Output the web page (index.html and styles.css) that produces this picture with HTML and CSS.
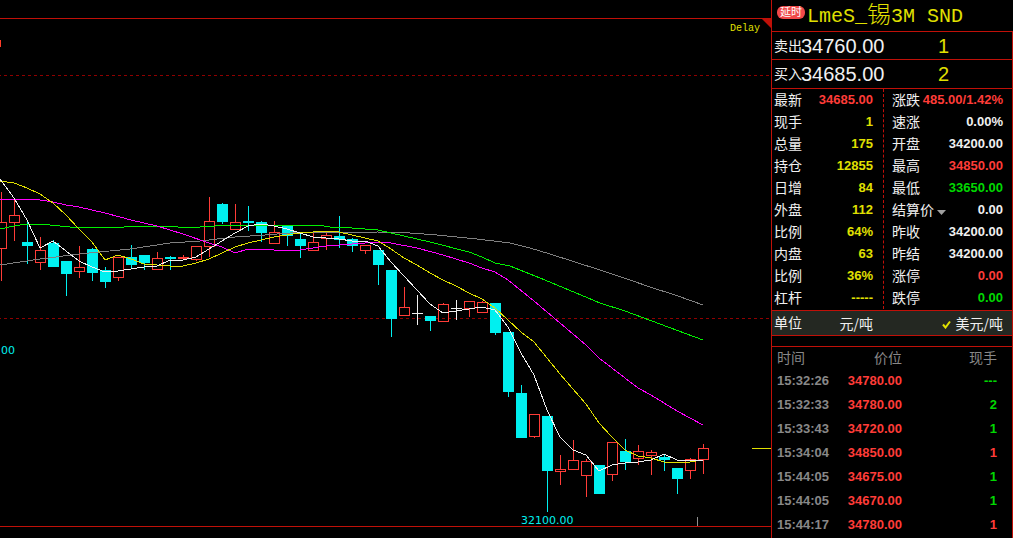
FILE: index.html
```html
<!DOCTYPE html>
<html lang="zh-CN">
<head>
<meta charset="utf-8">
<title>LmeS_锡3M SND</title>
<link rel="stylesheet" href="styles.css">
</head>
<body>
<div class="terminal">
  <main class="chart">
    <svg class="plot" viewBox="0 0 771 538" preserveAspectRatio="xMaxYMin meet" role="img" aria-label="K线图">
      <path class="frame" d="M0 18.5H771M0 526.5H771"/>
      <path class="corner" d="M762 19H771V28Z"/>
      <path class="grid" d="M-2 75.5H771M-2 318.5H771"/>
      <path class="clipped-mark" d="M0 40h1v7h-1z"/>
      <g id="candles" shape-rendering="crispEdges"></g>
      <g class="averages">
        <polyline class="ma60" points="0,265 40,259 79,254 130,249 170,243 200,241 235,237 265,235 290,233 378,232 410,233 437,235 477,239 510,243 530,248 550,254 600,270 630,280 650,287 675,295 703,305"/>
        <polyline class="ma40" points="0,229 14,226 27,224 40,224 70,227 124,227 150,226 178,227 200,227 215,226 235,225 318,225 330,227 352,228 378,230 404,236 430,242 469,252 482,257 495,263 510,266 545,280 600,303 625,311 703,340"/>
        <polyline class="ma20" points="0,200 14,199 40,200 53,202 66,205 79,207 105,213 131,220 157,226 183,234 209,243 222,247 235,253 248,249 274,250 300,250 313,248 326,246 352,244 378,242 391,243 417,248 443,255 469,263 482,268 495,272 508,280 534,301 560,323 586,345 599,358 638,388 651,395 677,411 703,425"/>
        <polyline class="ma10" points="0,181 14,183 27,188 40,194 53,203 66,215 79,229 92,242 105,260 118,255 131,259 144,264 157,265 170,266 183,266 196,263 209,259 222,253 235,247 248,243 261,240 274,237 287,235 300,233 313,232 326,231 339,232 352,235 365,238 378,241 391,249 404,258 417,265 430,273 443,280 456,286 469,293 482,299 495,308 508,320 521,332 534,342 547,358 560,374 573,389 586,404 599,423 612,437 625,450 638,456 651,458 664,462 677,463 690,462 703,460"/>
        <polyline class="ma5" points="0,179 14,198 27,220 40,248 53,241 66,251 79,261 92,267 105,272 118,271 131,269 144,267 157,266 170,260 183,260 196,257 209,249 222,241 235,233 248,226 261,224 274,226 287,229 300,233 313,237 326,238 339,239 352,241 365,241 378,246 391,262 404,276 417,290 430,304 443,313 456,311 469,309 482,307 495,310 508,327 521,353 534,375 547,410 560,437 573,450 586,455 599,471 612,465 625,463 638,462 651,460 664,454 677,460 690,460 703,460"/>
      </g>
      <path class="last-price" d="M752 448.5H771"/>
      <path class="tick" d="M697.5 517V526"/>
      <text class="delay" x="730" y="31">Delay</text>
      <text class="price-label" x="1" y="354">00</text>
      <text class="price-label" x="521" y="524">32100.00</text>
    </svg>
  </main>

  <aside class="panel">
    <header class="title">
      <span class="badge">延时</span>
      <h1 class="name">LmeS_<span class="han">锡</span>3M SND</h1>
    </header>
    <div class="box">
      <div class="depth"><span>卖出</span><b class="price">34760.00</b><b class="size">1</b></div>
      <div class="depth"><span>买入</span><b class="price">34685.00</b><b class="size">2</b></div>

      <section class="quotes">
        <dl class="list left">
          <div class="row"><dt>最新</dt><dd class="up">34685.00</dd></div>
          <div class="row"><dt>现手</dt><dd>1</dd></div>
          <div class="row"><dt>总量</dt><dd>175</dd></div>
          <div class="row"><dt>持仓</dt><dd>12855</dd></div>
          <div class="row"><dt>日增</dt><dd>84</dd></div>
          <div class="row"><dt>外盘</dt><dd>112</dd></div>
          <div class="row"><dt>比例</dt><dd>64%</dd></div>
          <div class="row"><dt>内盘</dt><dd>63</dd></div>
          <div class="row"><dt>比例</dt><dd>36%</dd></div>
          <div class="row"><dt>杠杆</dt><dd>-----</dd></div>
        </dl>
        <dl class="list right">
          <div class="row"><dt>涨跌</dt><dd class="up">485.00/1.42%</dd></div>
          <div class="row"><dt>速涨</dt><dd>0.00%</dd></div>
          <div class="row"><dt>开盘</dt><dd>34200.00</dd></div>
          <div class="row"><dt>最高</dt><dd class="up">34850.00</dd></div>
          <div class="row"><dt>最低</dt><dd class="down">33650.00</dd></div>
          <div class="row"><dt><button class="pick" type="button">结算价<svg class="caret" viewBox="0 0 9 5" aria-hidden="true"><path d="M0 0H9L4.500 5Z"/></svg></button></dt><dd>0.00</dd></div>
          <div class="row"><dt>昨收</dt><dd>34200.00</dd></div>
          <div class="row"><dt>昨结</dt><dd>34200.00</dd></div>
          <div class="row"><dt>涨停</dt><dd class="up">0.00</dd></div>
          <div class="row"><dt>跌停</dt><dd class="down">0.00</dd></div>
        </dl>
      </section>

      <div class="units">
        <span class="unit-label">单位</span>
        <button class="unit" type="button">元/吨</button>
        <button class="unit chosen" type="button" aria-pressed="true"><svg class="check" viewBox="0 0 9 9" aria-hidden="true"><path d="M1 4.500L3.500 7.500L8 1.500"/></svg>美元/吨</button>
      </div>
      <div class="spacer"></div>

      <table class="trades">
        <thead><tr><th>时间</th><th>价位</th><th>现手</th></tr></thead>
        <tbody>
          <tr><td>15:32:26</td><td>34780.00</td><td class="down">---</td></tr>
          <tr><td>15:32:33</td><td>34780.00</td><td class="down">2</td></tr>
          <tr><td>15:33:43</td><td>34720.00</td><td class="down">1</td></tr>
          <tr><td>15:34:04</td><td>34850.00</td><td class="up">1</td></tr>
          <tr><td>15:44:05</td><td>34675.00</td><td class="down">1</td></tr>
          <tr><td>15:44:05</td><td>34670.00</td><td class="down">1</td></tr>
          <tr><td>15:44:17</td><td>34780.00</td><td class="up">1</td></tr>
        </tbody>
      </table>
    </div>
  </aside>
</div>
<script src="chart.js"></script>
</body>
</html>
```
FILE: styles.css
```css
* { box-sizing: border-box; }
body {
  margin: 0;
  background: #000;
  color: #f0f0f0;
  font: 14px/22px "Liberation Sans", "Noto Sans CJK SC", sans-serif;
}
button { padding: 0; border: 0; background: none; color: inherit; font: inherit; cursor: pointer; }
.terminal { display: grid; grid-template-columns: minmax(0, 1fr) 242px; min-height: 100vh; }

.chart { overflow: hidden; }
.plot { display: block; width: 100%; }
.plot path, .plot polyline { fill: none; stroke-width: 1; }
.plot .frame { stroke: #c01008; }
.plot .corner { fill: #c01008; }
.plot .grid { stroke: #900000; stroke-dasharray: 3 3; }
.plot .clipped-mark { fill: #ff3c28; }
.plot .tick { stroke: #909090; }
.plot .last-price { stroke: #e0e000; }
.averages { shape-rendering: crispEdges; }
.ma5 { stroke: #f0f0f0; }
.ma10 { stroke: #e0e000; }
.ma20 { stroke: #ff00ff; }
.ma40 { stroke: #00f000; }
.ma60 { stroke: #808080; }
.plot .rise { stroke: #ff3c38; }
.plot .fall { stroke: #00f0f0; fill: #00f0f0; }
.plot .flat { stroke: #f0f0f0; }
.delay { fill: #e0e000; font: 10px "Liberation Mono", monospace; }
.price-label { fill: #00f0f0; font: 11px "DejaVu Sans", sans-serif; }

.panel { border-left: 1px solid #c01008; }
.title { display: flex; align-items: flex-start; height: 31px; padding: 6px 0 0 5px; gap: 2px; }
.badge {
  flex: none;
  width: 28px;
  border-radius: 6px;
  background: #f04848;
  color: #fff;
  font-size: 11px;
  line-height: 13px;
  text-align: center;
}
.name {
  display: flex;
  align-items: center;
  margin: 0;
  color: #e0e000;
  font: 20px/22px "Liberation Mono", "Noto Sans CJK SC", monospace;
  white-space: pre;
}
.han { font-size: 24px; font-weight: 300; }
.box { border-top: 1px solid #c01008; border-right: 1px solid #c01008; min-height: calc(100vh - 31px); }
.depth {
  display: grid;
  grid-template-columns: 27px 1fr 74px;
  align-items: center;
  height: 28px;
  padding-left: 2px;
  border-bottom: 1px solid #c01008;
  white-space: nowrap;
}
.depth + .depth { height: 29px; }
.depth .price, .depth .size { font-size: 20px; font-weight: 400; }
.depth .size { color: #e0e000; }

.quotes { display: grid; grid-template-columns: 112px 1fr; padding-bottom: 1px; }
.list { margin: 0; }
.left { padding-left: 2px; padding-right: 10px; border-right: 1px dashed #c01008; }
.right { padding-left: 8px; padding-right: 9px; }
.row { display: flex; justify-content: space-between; white-space: nowrap; }
.row dd { margin: 0; font-size: 13px; font-weight: 700; }
.left dd { color: #e0e000; }
.row .up, .up { color: #ff3c38; }
.down { color: #00d800; }
.caret { width: 9px; height: 5px; margin-left: 3px; fill: #a0a0a0; }

.units {
  display: grid;
  grid-template-columns: 1fr 36px 130px;
  padding: 0 9px 0 2px;
  background: #242822;
  border-top: 1px solid #c01008;
  border-bottom: 1px solid #c01008;
  line-height: 24px;
}
.unit { font-family: "Noto Sans CJK SC", sans-serif; text-align: right; white-space: nowrap; }
.check { width: 9px; height: 9px; margin-right: 5px; fill: none; stroke: #e0e000; stroke-width: 2; }
.spacer { height: 11px; border-bottom: 1px solid #c01008; }

.trades { width: 100%; border-collapse: collapse; table-layout: fixed; color: #888; }
.trades th { height: 22px; padding: 0; font-weight: 400; line-height: 22px; text-align: right; }
.trades td { height: 24px; padding: 0; font-size: 13px; font-weight: 700; text-align: right; }
.trades th:first-child, .trades td:first-child { width: 60px; padding-left: 5px; text-align: left; }
.trades th:nth-child(2), .trades td:nth-child(2) { width: 70px; }
.trades td:nth-child(2) { color: #ff3c38; }
.trades th:last-child, .trades td:last-child { padding-right: 15px; }
```
FILE: chart.js
```js
// Each bar: kind (r rise, f fall, w flat), high, body top, body bottom, low.
const bars = [
  ["r",192,222,249,281],["r",198,215,223,241],["f",222,242,246,264],["r",237,250,263,270],
  ["f",240,243,267,267],["f",261,261,274,296],["r",246,267,272,278],["f",248,249,273,281],
  ["f",267,270,282,288],["r",257,257,278,281],["f",245,257,265,268],["f",255,255,263,270],
  ["r",252,258,270,270],["f",256,257,259,270],["r",255,257,259,259],["r",246,246,260,261],
  ["r",197,221,247,257],["f",203,204,222,224],["r",204,222,230,230],["f",206,221,223,231],
  ["f",221,222,233,242],["r",221,232,244,244],["f",225,226,236,246],["f",232,239,246,258],
  ["r",231,242,251,251],["r",232,235,239,250],["f",216,236,240,248],["f",238,239,246,252],
  ["r",245,245,251,254],["f",250,250,265,285],["f",270,270,319,337],["r",287,307,316,316],
  ["w",295,313,314,325],["f",316,316,321,331],["r",303,304,322,322],["w",300,308,309,320],
  ["r",301,301,309,317],["r",301,302,313,313],["f",303,303,333,335],["f",332,332,392,397],
  ["f",385,393,438,438],["r",414,414,437,438],["f",416,416,471,512],["r",455,469,472,485],
  ["r",440,460,470,470],["r",459,461,476,497],["f",465,465,494,494],["r",442,442,475,481],
  ["f",439,451,462,470],["r",445,451,459,465],["r",450,452,456,475],["f",455,457,460,471],
  ["f",468,468,479,494],["r",458,459,471,479],["r",444,448,460,474]
];
const names = { r: "rise", f: "fall", w: "flat" };
const group = document.getElementById("candles");
bars.forEach(([kind, high, top, bottom, low], i) => {
  const x = 1 + i * 13;
  const c = x + 0.5;
  let d = `M${c} ${high}V${top}M${c} ${bottom}V${low}`;
  if (kind === "w") d += `M${x - 5} ${top + 0.5}H${x + 6}M${c} ${top}V${bottom}`;
  else d += `M${x - 4.5} ${top + 0.5}H${x + 5.5}V${bottom - 0.5}H${x - 4.5}Z`;
  const path = document.createElementNS("http://www.w3.org/2000/svg", "path");
  path.setAttribute("class", names[kind]);
  path.setAttribute("d", d);
  group.appendChild(path);
});
```
